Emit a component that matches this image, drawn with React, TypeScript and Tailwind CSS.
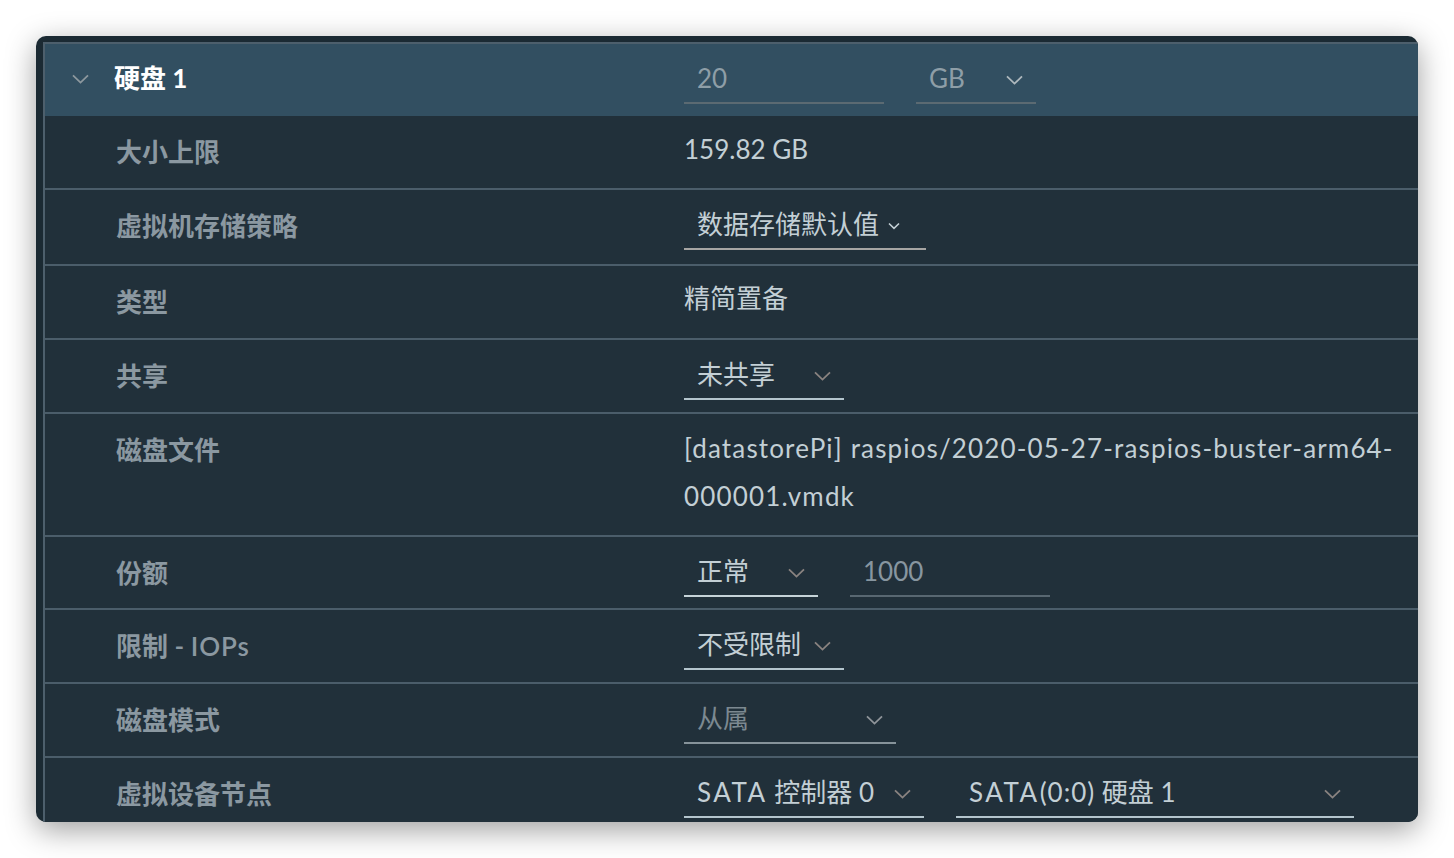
import React from "react";

const Chevron = ({ className }: { className: string }) => (
  <svg width="17" height="10" viewBox="0 0 17 10" fill="none" className={className}>
    <path d="M1 1.3 L8.5 8.6 L16 1.3" stroke="currentColor" strokeWidth="1.8" />
  </svg>
);

const SmallChevron = ({ className }: { className: string }) => (
  <svg width="12" height="8" viewBox="0 0 12 8" fill="none" className={className}>
    <path d="M1 1.5 L6 6.3 L11 1.5" stroke="currentColor" strokeWidth="1.6" />
  </svg>
);

function Label({ children }: { children: React.ReactNode }) {
  return (
    <div className="w-[639px] shrink-0 pl-[71px] pt-[12px] text-[26px] leading-[48px] font-semibold text-[#8b98a1]">
      {children}
    </div>
  );
}

function Select({
  w,
  text,
  textCls,
  lineCls,
  chevCls,
}: {
  w: string;
  text: React.ReactNode;
  textCls: string;
  lineCls: string;
  chevCls: string;
}) {
  return (
    <div className={`${w} h-[60px] pt-[10px] border-b-2 ${lineCls} flex items-start justify-between pl-[13px] pr-[13px]`}>
      <span className={`text-[26px] leading-[48px] whitespace-nowrap ${textCls}`}>{text}</span>
      <span className="h-[48px] flex items-center pt-[4px]">
        <Chevron className={chevCls} />
      </span>
    </div>
  );
}

function Input({ w, text, textCls, lineCls }: { w: string; text: string; textCls: string; lineCls: string }) {
  return (
    <div className={`${w} h-[60px] pt-[10px] border-b-2 ${lineCls} pl-[13px]`}>
      <span className={`text-[26px] leading-[48px] ${textCls}`}>{text}</span>
    </div>
  );
}

export default function App() {
  return (
    <div className="w-[1454px] h-[858px] bg-white p-[36px] font-[Lato,'Noto_Sans_CJK_SC',sans-serif]">
      <div className="w-[1382px] h-[786px] rounded-[10px] overflow-hidden bg-[#1b2a33] pl-[7px] pt-[6px] shadow-[0_8px_30px_rgba(0,0,0,0.38)]">
        <div className="h-full border-l-2 border-t-2 border-[#4d5f6c] bg-[#21303a]">
          {/* Header */}
          <div className="h-[72px] bg-[#324f61] flex items-start">
            <div className="w-[639px] shrink-0 flex items-start">
              <span className="ml-[27px] h-[48px] mt-[10px] flex items-center pt-[2px]">
                <Chevron className="text-[#8d989e]" />
              </span>
              <span className="ml-[25px] pt-[10px] text-[26px] leading-[48px] font-bold text-white">硬盘 1</span>
            </div>
            <div className="flex gap-[32px]">
              <Input w="w-[200px]" text="20" textCls="text-[#8e9ea7]" lineCls="border-[#5b6a72]" />
              <Select
                w="w-[120px]"
                text="GB"
                textCls="text-[#8e9ea7]"
                lineCls="border-[#5b6a72]"
                chevCls="text-[#aeb8bd]"
              />
            </div>
          </div>

          {/* 大小上限 */}
          <div className="h-[72px] flex items-start">
            <Label>大小上限</Label>
            <div className="pt-[9px] text-[26px] leading-[48px] text-[#c3cfd5]">159.82 GB</div>
          </div>

          {/* 虚拟机存储策略 */}
          <div className="h-[76px] border-t-2 border-[#4b5d6a] flex items-start">
            <Label>虚拟机存储策略</Label>
            <div className="w-[242px] h-[60px] pt-[10px] border-b-2 border-[#a6a5a3] flex items-start pl-[13px]">
              <span className="text-[26px] leading-[48px] text-[#c3cfd5] whitespace-nowrap">数据存储默认值</span>
              <span className="h-[48px] flex items-center ml-[9px] pt-[4px]">
                <SmallChevron className="text-[#c3cfd5]" />
              </span>
            </div>
          </div>

          {/* 类型 */}
          <div className="h-[74px] border-t-2 border-[#4b5d6a] flex items-start">
            <Label>类型</Label>
            <div className="pt-[8px] text-[26px] leading-[48px] text-[#c3cfd5]">精简置备</div>
          </div>

          {/* 共享 */}
          <div className="h-[74px] border-t-2 border-[#4b5d6a] flex items-start">
            <Label>共享</Label>
            <Select
              w="w-[160px]"
              text="未共享"
              textCls="text-[#c3cfd5]"
              lineCls="border-[#b4c5cd]"
              chevCls="text-[#8a8380]"
            />
          </div>

          {/* 磁盘文件 */}
          <div className="h-[123px] border-t-2 border-[#4b5d6a] flex items-start">
            <Label>磁盘文件</Label>
            <div className="pt-[10px] text-[26px] leading-[48px] tracking-[1.15px] text-[#c3cfd5] whitespace-nowrap">
              <div>[datastorePi] raspios/2020-05-27-raspios-buster-arm64-</div>
              <div>000001.vmdk</div>
            </div>
          </div>

          {/* 份额 */}
          <div className="h-[73px] border-t-2 border-[#4b5d6a] flex items-start">
            <Label>份额</Label>
            <div className="flex gap-[32px]">
              <Select
                w="w-[134px]"
                text="正常"
                textCls="text-[#c3cfd5]"
                lineCls="border-[#c6d3d8]"
                chevCls="text-[#8a8380]"
              />
              <Input w="w-[200px]" text="1000" textCls="text-[#8796a0]" lineCls="border-[#586771]" />
            </div>
          </div>

          {/* 限制 - IOPs */}
          <div className="h-[74px] border-t-2 border-[#4b5d6a] flex items-start">
            <Label>
              限制 - <span className="tracking-[1px]">IOPs</span>
            </Label>
            <Select
              w="w-[160px]"
              text="不受限制"
              textCls="text-[#c3cfd5]"
              lineCls="border-[#b4c5cd]"
              chevCls="text-[#8a8380]"
            />
          </div>

          {/* 磁盘模式 */}
          <div className="h-[74px] border-t-2 border-[#4b5d6a] flex items-start">
            <Label>磁盘模式</Label>
            <Select
              w="w-[212px]"
              text="从属"
              textCls="text-[#7c8991]"
              lineCls="border-[#86939a]"
              chevCls="text-[#8f9499]"
            />
          </div>

          {/* 虚拟设备节点 */}
          <div className="h-[74px] border-t-2 border-[#4b5d6a] flex items-start">
            <Label>虚拟设备节点</Label>
            <div className="flex gap-[32px]">
              <Select
                w="w-[240px]"
                text={
                  <>
                    <span className="tracking-[2.5px]">SATA</span> 控制器 <span className="tracking-[1px]">0</span>
                  </>
                }
                textCls="text-[#c3cfd5]"
                lineCls="border-[#b4c5cd]"
                chevCls="text-[#8a8380]"
              />
              <Select
                w="w-[398px]"
                text={
                  <>
                    <span className="tracking-[2.5px]">SATA</span>
                    <span className="tracking-[1px]">(0:0)</span> 硬盘 1
                  </>
                }
                textCls="text-[#c3cfd5]"
                lineCls="border-[#b4c5cd]"
                chevCls="text-[#8a8380]"
              />
            </div>
          </div>
        </div>
      </div>
    </div>
  );
}
